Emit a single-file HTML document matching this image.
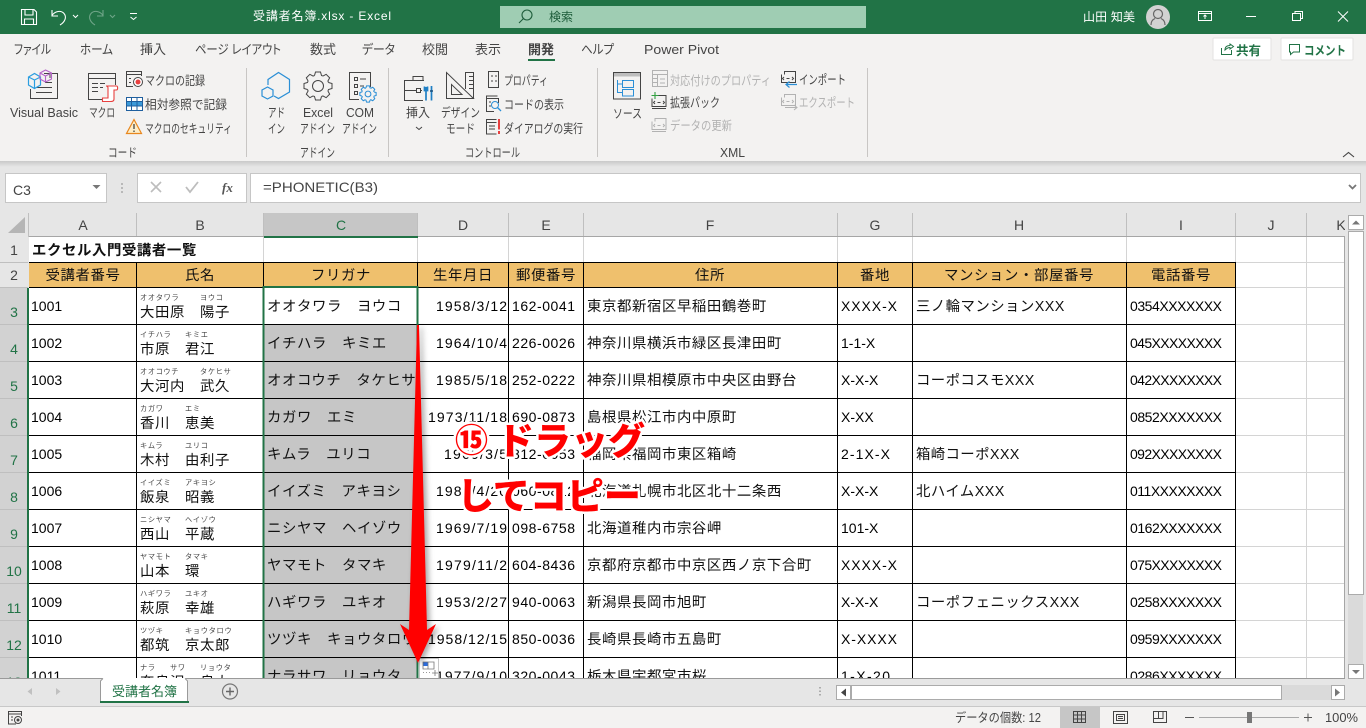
<!DOCTYPE html>
<html lang="ja"><head><meta charset="utf-8"><title>受講者名簿.xlsx - Excel</title>
<style>
html,body{margin:0;padding:0;background:#e6e6e6;overflow:hidden}
svg{display:block;font-family:"Liberation Sans","Noto Sans CJK JP",sans-serif}
.r{font-size:12.5px;fill:#444}
.g{font-size:12.5px;fill:#b2b2b2}
.w{font-size:12px;fill:#fff}
.t{font-size:14px;fill:#000}
.j{font-size:14.4px;letter-spacing:.6px;fill:#111}
.y{font-size:7.2px;letter-spacing:.7px;fill:#444}
.h{font-size:14px;fill:#444;text-anchor:middle}
.n{font-size:14px;fill:#217346;text-anchor:middle}
.big{font-size:37px;font-weight:900;fill:#f00;stroke:#fff;stroke-width:5px;stroke-linejoin:round;paint-order:stroke}
.i{fill:none;stroke:#444;stroke-width:1}
.b{fill:none;stroke:#2b9ee0;stroke-width:1.2}
.q{fill:none;stroke:#b2b2b2;stroke-width:1}
</style></head><body>
<svg width="1366" height="728" viewBox="0 0 1366 728" xmlns="http://www.w3.org/2000/svg">
<defs>
<path id="gt" d="M-3.5-10.5L-2.5-14H2.5L3.5-10.5L4.95-9.9"/>
<g id="gear"><use href="#gt"/><use href="#gt" transform="rotate(45)"/><use href="#gt" transform="rotate(90)"/><use href="#gt" transform="rotate(135)"/><use href="#gt" transform="rotate(180)"/><use href="#gt" transform="rotate(225)"/><use href="#gt" transform="rotate(270)"/><use href="#gt" transform="rotate(315)"/></g>
<linearGradient id="sh" x1="0" y1="0" x2="0" y2="1"><stop offset="0" stop-color="#c9c9c9"/><stop offset="1" stop-color="#e6e6e6"/></linearGradient>
</defs>

<!-- backgrounds -->
<rect width="1366" height="728" fill="#e6e6e6"/>
<rect width="1366" height="34" fill="#217346"/>
<rect y="34" width="1366" height="127" fill="#f3f2f1"/>
<rect y="161" width="1366" height="6" fill="url(#sh)"/>

<!-- title bar -->
<g fill="none" stroke="#fff" stroke-width="1.1">
<path d="M21.5 9.5H34L36.5 12V24.5H21.5ZM25 9.5V15H33V9.5M24.5 24.5V19H33.5V24.5"/>
<path d="M52 10V16H58M52 15.5C55 11 61 10 64 13.5C67 17 65 22 60 25"/>
<path d="M73 15l2.5 2.5 2.5-2.5" stroke-width="1"/>
<g stroke="#6fa588"><path d="M103 10V16H97M103 15.5C100 11 94 10 91 13.5C88 17 90 22 95 25"/><path d="M110 15l2.5 2.5 2.5-2.5"/></g>
<path d="M130 13.5H137M130.5 17l3 2.5 3-2.5" stroke-width="1"/>
</g>
<text class="w" x="253" y="20" textLength="138" lengthAdjust="spacing" font-size="13">受講者名簿.xlsx  -  Excel</text>
<rect x="500" y="6" width="366" height="22" fill="#9fcdb3"/>
<g fill="none" stroke="#1d5c3a" stroke-width="1.1"><circle cx="527" cy="15" r="5"/><path d="M523.5 18.5L519 23"/></g>
<text x="549" y="21" font-size="12" fill="#1d5c3a">検索</text>
<text class="w" x="1083" y="21" textLength="52" lengthAdjust="spacing">山田 知美</text>
<circle cx="1158" cy="17" r="12" fill="#d2d2d2"/>
<g fill="none" stroke="#666" stroke-width="1.2"><circle cx="1158" cy="14" r="4.5"/><path d="M1151 25C1151 20 1154 19 1155 18.5M1165 25C1165 20 1162 19 1161 18.5"/></g>
<g fill="none" stroke="#fff" stroke-width="1">
<path d="M1198.5 11.5H1211.5V20.5H1198.5ZM1198.5 13.5H1211.5M1205 19V15M1203.5 16.5L1205 15L1206.5 16.5"/>
<path d="M1246 16.5H1256"/>
<path d="M1292.5 13.5H1300.5V20.5H1292.5ZM1295 13V11.500H1302.5V18.5H1301"/>
<path d="M1338 11.5L1348 21.5M1348 11.5L1338 21.5"/>
</g>

<!-- tabs -->
<g style="font-size:13px;fill:#444;font-feature-settings:'palt'">
<text x="14" y="54" textLength="37" lengthAdjust="spacingAndGlyphs">ファイル</text>
<text x="80" y="54" textLength="33" lengthAdjust="spacingAndGlyphs">ホーム</text>
<text x="140" y="54" textLength="26" lengthAdjust="spacingAndGlyphs">挿入</text>
<text x="195" y="54" textLength="86" lengthAdjust="spacingAndGlyphs">ページ レイアウト</text>
<text x="310" y="54" textLength="26" lengthAdjust="spacingAndGlyphs">数式</text>
<text x="362" y="54" textLength="33" lengthAdjust="spacingAndGlyphs">データ</text>
<text x="422" y="54" textLength="26" lengthAdjust="spacingAndGlyphs">校閲</text>
<text x="475" y="54" textLength="26" lengthAdjust="spacingAndGlyphs">表示</text>
<text x="528" y="54" textLength="26" lengthAdjust="spacingAndGlyphs" font-weight="700">開発</text>
<text x="581" y="54" textLength="33" lengthAdjust="spacingAndGlyphs">ヘルプ</text>
<text x="644" y="54" textLength="75" lengthAdjust="spacingAndGlyphs">Power Pivot</text>
</g>
<rect x="528" y="59" width="27" height="2" fill="#217346"/>
<!-- share / comment -->
<rect x="1213" y="38" width="58" height="22" rx="1" fill="#fff" stroke="#e3e2e1"/>
<rect x="1281" y="38" width="72" height="22" rx="1" fill="#fff" stroke="#e3e2e1"/>
<g fill="none" stroke="#217346" stroke-width="1"><path d="M1221.5 48V54.5H1231.5V50M1225 50C1225 47 1227 45.5 1230 45.5V44L1233.5 46.5L1230 49V47.5C1228 47.5 1226.5 48.5 1225 50Z"/><path d="M1289.5 44.5H1299.5V52H1293.5L1290.5 54.5V52H1289.5Z"/></g>
<text x="1236" y="55" font-size="12.5" font-weight="700" fill="#217346">共有</text>
<text x="1304" y="55" font-size="12.5" font-weight="700" fill="#217346" textLength="42" lengthAdjust="spacingAndGlyphs">コメント</text>
<path d="M1343 157L1348.5 152.5L1354 157" fill="none" stroke="#444" stroke-width="1.1"/>

<!-- separators -->
<g fill="#c8c6c4"><rect x="246" y="68" width="1" height="89"/><rect x="388" y="68" width="1" height="89"/><rect x="597" y="68" width="1" height="89"/><rect x="867" y="68" width="1" height="89"/></g>

<!-- ribbon labels -->
<text class="r" x="10" y="117" textLength="68" lengthAdjust="spacingAndGlyphs">Visual Basic</text>
<text class="r" x="89" y="117" textLength="26" lengthAdjust="spacingAndGlyphs">マクロ</text>
<text class="r" x="145" y="85" textLength="60" lengthAdjust="spacingAndGlyphs">マクロの記録</text>
<text class="r" x="145" y="109" textLength="82" lengthAdjust="spacingAndGlyphs">相対参照で記録</text>
<text class="r" x="145" y="133" textLength="87" lengthAdjust="spacingAndGlyphs">マクロのセキュリティ</text>
<text class="r" x="108" y="157" textLength="29" lengthAdjust="spacingAndGlyphs" font-size="11">コード</text>
<text class="r" x="268" y="117" textLength="17" lengthAdjust="spacingAndGlyphs">アド</text>
<text class="r" x="268" y="133" textLength="17" lengthAdjust="spacingAndGlyphs">イン</text>
<text class="r" x="303" y="117" textLength="30" lengthAdjust="spacingAndGlyphs">Excel</text>
<text class="r" x="300" y="133" textLength="35" lengthAdjust="spacingAndGlyphs">アドイン</text>
<text class="r" x="346" y="117" textLength="28" lengthAdjust="spacingAndGlyphs">COM</text>
<text class="r" x="342" y="133" textLength="35" lengthAdjust="spacingAndGlyphs">アドイン</text>
<text class="r" x="300" y="157" textLength="35" lengthAdjust="spacingAndGlyphs">アドイン</text>
<text class="r" x="406" y="117" textLength="24" lengthAdjust="spacingAndGlyphs">挿入</text>
<path d="M416 127l3 2.5 3-2.5" fill="none" stroke="#444"/>
<text class="r" x="441" y="117" textLength="39" lengthAdjust="spacingAndGlyphs">デザイン</text>
<text class="r" x="446" y="133" textLength="29" lengthAdjust="spacingAndGlyphs">モード</text>
<text class="r" x="504" y="85" textLength="44" lengthAdjust="spacingAndGlyphs">プロパティ</text>
<text class="r" x="504" y="109" textLength="60" lengthAdjust="spacingAndGlyphs">コードの表示</text>
<text class="r" x="504" y="133" textLength="79" lengthAdjust="spacingAndGlyphs">ダイアログの実行</text>
<text class="r" x="465" y="157" textLength="55" lengthAdjust="spacingAndGlyphs">コントロール</text>
<text class="r" x="613" y="118" textLength="29" lengthAdjust="spacingAndGlyphs">ソース</text>
<text class="g" x="670" y="85" textLength="101" lengthAdjust="spacingAndGlyphs">対応付けのプロパティ</text>
<text class="r" x="670" y="107" textLength="50" lengthAdjust="spacingAndGlyphs">拡張パック</text>
<text class="g" x="670" y="130" textLength="62" lengthAdjust="spacingAndGlyphs">データの更新</text>
<text class="r" x="799" y="84" textLength="47" lengthAdjust="spacingAndGlyphs">インポート</text>
<text class="g" x="799" y="107" textLength="56" lengthAdjust="spacingAndGlyphs">エクスポート</text>
<text class="r" x="720" y="157" textLength="25" lengthAdjust="spacingAndGlyphs">XML</text>

<!-- ribbon icons -->
<path class="i" d="M44 73.5H57.5V98.5H30.5V89M36 87.5H52M36 92.5H52M45 82.5H52M50 73.5V78"/>
<path class="b" d="M28.5 77L34.5 73.5L40.5 77V85L34.5 88.5L28.5 85ZM28.5 77L34.5 80L40.5 77M34.5 80V88.5"/>
<path fill="none" stroke="#b565c8" stroke-width="1.1" d="M40 73L45.5 70L51.5 73V79L45.5 82L40 79ZM40 73L45.5 76L51.5 73M45.5 76V82"/>
<path class="i" d="M103 99.5H88.5V73.5H115.5V85M88.5 78.5H115.5M92 83.5H98M100 83.5H105M92 87.5H98M92 91.5H98M100 87.5H103"/>
<path fill="#fff" stroke="#e8403f" stroke-width="1.1" d="M106 86H116.5C118 86 118 90 116.5 90H114V99C114 101.5 112 101.5 110 101.5H102.5V98H108V88C108 86.5 107 86 106 86Z"/>
<path class="i" d="M133 86.5H126.5V71.5H141.5V76M126.5 74.5H141.5M129 78.5H131M129 82.5H131"/>
<circle cx="138" cy="82" r="4.5" fill="#fff" stroke="#444"/><circle cx="138" cy="82" r="2.5" fill="#e8403f"/>
<rect x="126.5" y="97.5" width="16" height="13" fill="#fff" stroke="#1f5f9e"/><rect x="127" y="101.5" width="15" height="4.5" fill="#3a9ad9"/><path d="M131.5 97.5V110.5M137 97.5V110.5M126.5 101.5H142.5M126.5 106H142.5" stroke="#1f5f9e" fill="none"/>
<path d="M134 119.5L141.5 133.5H126.5Z" fill="#fdeec8" stroke="#e8871e" stroke-width="1.2"/><path d="M134 124V129M134 130.5V132" stroke="#444" stroke-width="1.3"/>

<path fill="none" stroke="#2b8fd6" stroke-width="1.2" d="M268 85V79.5L278.5 72.5L289.5 79.5V92L278.5 98.5L274 96"/>
<path fill="none" stroke="#2b8fd6" stroke-width="1.2" d="M267.5 87L273 90V96L267.5 99L262 96V90Z"/>
<g transform="translate(318 86)" class="i"><use href="#gear"/><circle r="5.5"/></g>
<path class="i" d="M359 99.5H349.5V72.5H370.5V87M354.5 77.5H357.5V80.5H354.5ZM354.5 84.5H357.5V87.5H354.5ZM354.5 91.5H357.5V94.5H354.5ZM360 79H366M360 86H364"/>
<g transform="translate(368 94) scale(.58)" fill="none" stroke="#2b8fd6" stroke-width="1.8"><use href="#gear"/><circle r="5"/></g>

<path class="i" d="M424 80.5H404.5V100.5H423M413 80.5V76.5H423V80.5M404.5 90.5H416M420 90.5H422M416.5 88.5H420.5V92.5H416.5Z"/>
<path fill="none" stroke="#1f7fc4" stroke-width="1.7" d="M426 87V90M424.5 86.5V90.5H427.5V86.5M426 91V100.5M431.5 86V100.5"/>
<path fill="none" stroke="#1a4f7a" stroke-width="1.5" d="M430 91H433"/>
<path class="i" d="M446.5 72.5V98.5H473.5ZM451.5 84.5V94.5H462ZM465.5 89V72.5H473.5V98.5M469 76.5H473.5M469 80.5H473.5M469 84.5H473.5M469 88.5H473.5"/>
<path class="i" d="M488.5 71.5H498.5V87.5H488.5ZM491 76H493M495 76H497M491 81H493M495 81H497"/>
<path class="i" d="M497.5 96H486.5V111.5H494M486.5 98.5H498.5V103M489 102H491M489 106H491"/>
<circle cx="495" cy="105" r="3.5" fill="none" stroke="#2b8fd6"/><path d="M497.5 107.5L501 111" stroke="#2b8fd6" stroke-width="1.3"/>
<path class="i" d="M496.5 119.5H486.5V134H496.5M486.5 122.5H496.5M489 126H495M489 129H495"/>
<path d="M499 119V129.5M499 131V134" stroke="#e8403f" stroke-width="2"/>

<rect x="613.5" y="72.5" width="27" height="26.5" fill="none" stroke="#444"/><rect x="614" y="73" width="26" height="3.5" fill="#bdbdbd"/>
<path fill="none" stroke="#2b8fd6" stroke-width="1" d="M622.5 80.5H633.5V87.5H622.5ZM622.5 89.5H633.5V96H622.5ZM617.5 80V92.5H622M617.5 84H622"/>

<path class="q" d="M652.5 70.5H667.5V86.5H652.5ZM652.5 74.5H667.5M657.5 74.5V86.5M652.5 78.5H657.5M652.5 82.5H657.5M660 79H665M660 83H665"/>
<path class="i" d="M652 98.5V106.5H666V95.5H655V98.5M652 108.5H666"/><path d="M655 101l-1.5 1.5 1.5 1.5M663 101l1.5 1.5-1.5 1.5M657.5 102.5h3" class="i"/>
<path d="M655 92V99M651.5 95.5H658.5" stroke="#30a040" stroke-width="1.1"/>
<path class="q" d="M652 121.5V129.5H666V118.5H655V121.5M652 131.5H666M655 124l-1.5 1.5 1.5 1.5M663 124l1.5 1.5-1.5 1.5M657.5 125.5h3"/>
<path class="i" d="M781.5 74.5V82.5H795.5V71.5H784.5V74.5M784 77l-1.5 1.5 1.5 1.5M792 77l1.5 1.5-1.5 1.5M786.5 78.5h3"/>
<path fill="none" stroke="#2b8fd6" stroke-width="1.2" d="M797 84.5H786M789.5 81.5L786 84.5L789.5 87.5"/>
<path class="q" d="M781.5 97.5V105.5H795.5V94.5H784.5V97.5M784 100l-1.5 1.5 1.5 1.5M792 100l1.5 1.5-1.5 1.5M786.5 101.5h3M785 107.5H797M794 105L797 107.5L794 110"/>

<!-- formula bar -->
<rect x="5.5" y="173.5" width="101" height="29" fill="#fff" stroke="#c6c6c6"/>
<text x="13" y="195" font-size="14" fill="#444">C3</text>
<path d="M92.5 185H100.5L96.5 189Z" fill="#777"/>
<path d="M122 183v2M122 187v2M122 191v2" stroke="#aaa" stroke-width="1.5"/>
<rect x="137.5" y="173.5" width="109" height="29" fill="#fff" stroke="#c6c6c6"/>
<path d="M151 182L161 192M161 182L151 192" stroke="#bdbdbd" stroke-width="1.6"/>
<path d="M186 187L190 192L198 182" stroke="#bdbdbd" stroke-width="1.8" fill="none"/>
<text x="222" y="192" font-family="Liberation Serif" font-style="italic" font-weight="700" font-size="13" fill="#555">fx</text>
<rect x="250.5" y="173.5" width="1110" height="29" fill="#fff" stroke="#c6c6c6"/>
<text x="263" y="192" font-size="14" fill="#444" textLength="115" lengthAdjust="spacingAndGlyphs">=PHONETIC(B3)</text>
<path d="M1349 185L1352.5 188.5L1356 185" fill="none" stroke="#777" stroke-width="1.8"/>

<!-- grid -->
<rect x="29" y="237" width="1316" height="441" fill="#fff"/>
<!-- headers -->
<rect x="0" y="213" width="1345" height="24" fill="#e6e6e6"/>
<rect x="264" y="213" width="154" height="23" fill="#c6c6c6"/>
<rect x="0" y="237" width="28" height="441" fill="#e6e6e6"/>
<rect x="0" y="288" width="28" height="390" fill="#d2d2d2"/>
<path d="M8 233L25 217V233Z" fill="#b5b5b5"/>
<g fill="#bfbfbf"><rect x="28" y="213" width="1" height="24"/><rect x="136" y="213" width="1" height="24"/><rect x="263" y="213" width="1" height="24"/><rect x="417" y="213" width="1" height="24"/><rect x="508" y="213" width="1" height="24"/><rect x="583" y="213" width="1" height="24"/><rect x="837" y="213" width="1" height="24"/><rect x="912" y="213" width="1" height="24"/><rect x="1126" y="213" width="1" height="24"/><rect x="1235" y="213" width="1" height="24"/><rect x="1306" y="213" width="1" height="24"/></g>
<text class="h" x="83" y="230">A</text><text class="h" x="200" y="230">B</text><text class="n" x="341" y="230">C</text><text class="h" x="463" y="230">D</text><text class="h" x="546" y="230">E</text><text class="h" x="710" y="230">F</text><text class="h" x="875" y="230">G</text><text class="h" x="1019" y="230">H</text><text class="h" x="1181" y="230">I</text><text class="h" x="1271" y="230">J</text><text class="h" x="1341" y="230">K</text>
<text class="h" x="14" y="255">1</text><text class="h" x="14" y="280">2</text>
<text class="n" x="14" y="317">3</text><text class="n" x="14" y="354">4</text><text class="n" x="14" y="391">5</text><text class="n" x="14" y="428">6</text><text class="n" x="14" y="465">7</text><text class="n" x="14" y="502">8</text><text class="n" x="14" y="539">9</text><text class="n" x="14" y="576">10</text><text class="n" x="14" y="613">11</text><text class="n" x="14" y="650">12</text><text class="n" x="14" y="687">13</text>
<g fill="#bfbfbf"><rect y="262" width="28" height="1"/><rect y="287" width="28" height="1"/><rect y="324" width="28" height="1"/><rect y="361" width="28" height="1"/><rect y="398" width="28" height="1"/><rect y="435" width="28" height="1"/><rect y="472" width="28" height="1"/><rect y="509" width="28" height="1"/><rect y="546" width="28" height="1"/><rect y="583" width="28" height="1"/><rect y="620" width="28" height="1"/><rect y="657" width="28" height="1"/></g>
<!-- fills -->
<rect x="29" y="263" width="1207" height="25" fill="#efc06d"/>
<rect x="264" y="325" width="154" height="353" fill="#c6c6c6"/>
<!-- light gridlines -->
<path d="M263.5 237V263M417.5 237V263M508.5 237V263M583.5 237V263M837.5 237V263M912.5 237V263M1126.5 237V263M1235.5 237V263M1306.5 237V678M264 262.5H1345M1236 287.5H1345M1236 324.5H1345M1236 361.5H1345M1236 398.5H1345M1236 435.5H1345M1236 472.5H1345M1236 509.5H1345M1236 546.5H1345M1236 583.5H1345M1236 620.5H1345M1236 657.5H1345" stroke="#d4d4d4" fill="none"/>
<path d="M1345 236.5H29M1344.5 236V678" stroke="#a6a6a6" fill="none"/>
<!-- black borders -->
<path d="M29 262.5H1236M29 287.5H1236M29 324.5H1236M29 361.5H1236M29 398.5H1236M29 435.5H1236M29 472.5H1236M29 509.5H1236M29 546.5H1236M29 583.5H1236M29 620.5H1236M29 657.5H1236M136.5 262V678M263.5 262V678M417.5 262V678M508.5 262V678M583.5 262V678M837.5 262V678M912.5 262V678M1126.5 262V678M1235.5 262V678" stroke="#000" fill="none"/>
<!-- selection -->
<rect x="264" y="236" width="154" height="2" fill="#217346"/>
<rect x="27" y="288" width="2" height="390" fill="#217346"/>
<rect x="263.5" y="287" width="154" height="395" fill="none" stroke="#217346" stroke-width="2"/>

<!-- text row 1,2 -->
<text class="j" x="32" y="255" font-weight="700">エクセル入門受講者一覧</text>
<g text-anchor="middle">
<text class="j" x="83" y="280">受講者番号</text><text class="j" x="200" y="280">氏名</text><text class="j" x="341" y="280">フリガナ</text><text class="j" x="463" y="280">生年月日</text><text class="j" x="546" y="280">郵便番号</text><text class="j" x="710" y="280">住所</text><text class="j" x="875" y="280">番地</text><text class="j" x="1019" y="280">マンション・部屋番号</text><text class="j" x="1181" y="280">電話番号</text>
</g>

<!-- R3 -->
<text class="t" x="31" y="311">1001</text><text class="y" x="140" y="300">オオタワラ</text><text class="y" x="200" y="300">ヨウコ</text><text class="j" x="140" y="317">大田原　陽子</text><text class="j" x="267" y="311">オオタワラ　ヨウコ</text><text class="t" x="436" y="311" textLength="71">1958/3/12</text><text class="t" x="512" y="311" textLength="63">162-0041</text><text class="j" x="587" y="311">東京都新宿区早稲田鶴巻町</text><text class="t" x="841" y="311" textLength="56">XXXX-X</text><text class="j" x="916" y="311" textLength="149">三ノ輪マンションXXX</text><text class="t" x="1130" y="311" textLength="92">0354XXXXXXX</text>
<!-- R4 -->
<text class="t" x="31" y="348">1002</text><text class="y" x="140" y="337">イチハラ</text><text class="y" x="185" y="337">キミエ</text><text class="j" x="140" y="354">市原　君江</text><text class="j" x="267" y="348">イチハラ　キミエ</text><text class="t" x="436" y="348" textLength="71">1964/10/4</text><text class="t" x="512" y="348" textLength="63">226-0026</text><text class="j" x="587" y="348">神奈川県横浜市緑区長津田町</text><text class="t" x="841" y="348">1-1-X</text><text class="t" x="1130" y="348" textLength="92">045XXXXXXXX</text>
<!-- R5 -->
<text class="t" x="31" y="385">1003</text><text class="y" x="140" y="374">オオコウチ</text><text class="y" x="200" y="374">タケヒサ</text><text class="j" x="140" y="391">大河内　武久</text><text class="j" x="267" y="385">オオコウチ　タケヒサ</text><text class="t" x="436" y="385" textLength="71">1985/5/18</text><text class="t" x="512" y="385" textLength="63">252-0222</text><text class="j" x="587" y="385">神奈川県相模原市中央区由野台</text><text class="t" x="841" y="385">X-X-X</text><text class="j" x="916" y="385" textLength="119">コーポコスモXXX</text><text class="t" x="1130" y="385" textLength="92">042XXXXXXXX</text>
<!-- R6 -->
<text class="t" x="31" y="422">1004</text><text class="y" x="140" y="411">カガワ</text><text class="y" x="185" y="411">エミ</text><text class="j" x="140" y="428">香川　恵美</text><text class="j" x="267" y="422">カガワ　エミ</text><text class="t" x="428" y="422" textLength="79">1973/11/18</text><text class="t" x="512" y="422" textLength="63">690-0873</text><text class="j" x="587" y="422">島根県松江市内中原町</text><text class="t" x="841" y="422">X-XX</text><text class="t" x="1130" y="422" textLength="92">0852XXXXXXX</text>
<!-- R7 -->
<text class="t" x="31" y="459">1005</text><text class="y" x="140" y="448">キムラ</text><text class="y" x="185" y="448">ユリコ</text><text class="j" x="140" y="465">木村　由利子</text><text class="j" x="267" y="459">キムラ　ユリコ</text><text class="t" x="444" y="459" textLength="63">1969/3/5</text><text class="t" x="512" y="459" textLength="63">812-0053</text><text class="j" x="587" y="459">福岡県福岡市東区箱崎</text><text class="t" x="841" y="459" textLength="49">2-1X-X</text><text class="j" x="916" y="459" textLength="104">箱崎コーポXXX</text><text class="t" x="1130" y="459" textLength="92">092XXXXXXXX</text>
<!-- R8 -->
<text class="t" x="31" y="496">1006</text><text class="y" x="140" y="485">イイズミ</text><text class="y" x="185" y="485">アキヨシ</text><text class="j" x="140" y="502">飯泉　昭義</text><text class="j" x="267" y="496">イイズミ　アキヨシ</text><text class="t" x="436" y="496" textLength="71">1984/4/20</text><text class="t" x="512" y="496" textLength="63">060-0812</text><text class="j" x="587" y="496">北海道札幌市北区北十二条西</text><text class="t" x="841" y="496">X-X-X</text><text class="j" x="916" y="496" textLength="89">北ハイムXXX</text><text class="t" x="1130" y="496" textLength="92">011XXXXXXXX</text>
<!-- R9 -->
<text class="t" x="31" y="533">1007</text><text class="y" x="140" y="522">ニシヤマ</text><text class="y" x="185" y="522">ヘイゾウ</text><text class="j" x="140" y="539">西山　平蔵</text><text class="j" x="267" y="533">ニシヤマ　ヘイゾウ</text><text class="t" x="436" y="533" textLength="71">1969/7/19</text><text class="t" x="512" y="533" textLength="63">098-6758</text><text class="j" x="587" y="533">北海道稚内市宗谷岬</text><text class="t" x="841" y="533">101-X</text><text class="t" x="1130" y="533" textLength="92">0162XXXXXXX</text>
<!-- R10 -->
<text class="t" x="31" y="570">1008</text><text class="y" x="140" y="559">ヤマモト</text><text class="y" x="185" y="559">タマキ</text><text class="j" x="140" y="576">山本　環</text><text class="j" x="267" y="570">ヤマモト　タマキ</text><text class="t" x="436" y="570" textLength="71">1979/11/2</text><text class="t" x="512" y="570" textLength="63">604-8436</text><text class="j" x="587" y="570">京都府京都市中京区西ノ京下合町</text><text class="t" x="841" y="570" textLength="56">XXXX-X</text><text class="t" x="1130" y="570" textLength="92">075XXXXXXXX</text>
<!-- R11 -->
<text class="t" x="31" y="607">1009</text><text class="y" x="140" y="596">ハギワラ</text><text class="y" x="185" y="596">ユキオ</text><text class="j" x="140" y="613">萩原　幸雄</text><text class="j" x="267" y="607">ハギワラ　ユキオ</text><text class="t" x="436" y="607" textLength="71">1953/2/27</text><text class="t" x="512" y="607" textLength="63">940-0063</text><text class="j" x="587" y="607">新潟県長岡市旭町</text><text class="t" x="841" y="607">X-X-X</text><text class="j" x="916" y="607" textLength="164">コーポフェニックスXXX</text><text class="t" x="1130" y="607" textLength="92">0258XXXXXXX</text>
<!-- R12 -->
<text class="t" x="31" y="644">1010</text><text class="y" x="140" y="633">ツヅキ</text><text class="y" x="185" y="633">キョウタロウ</text><text class="j" x="140" y="650">都筑　京太郎</text><text class="j" x="267" y="644">ツヅキ　キョウタロウ</text><text class="t" x="428" y="644" textLength="79">1958/12/15</text><text class="t" x="512" y="644" textLength="63">850-0036</text><text class="j" x="587" y="644">長崎県長崎市五島町</text><text class="t" x="841" y="644" textLength="56">X-XXXX</text><text class="t" x="1130" y="644" textLength="92">0959XXXXXXX</text>
<!-- R13 -->
<text class="t" x="31" y="681">1011</text><text class="y" x="140" y="670">ナラ</text><text class="y" x="170" y="670">サワ</text><text class="y" x="200" y="670">リョウタ</text><text class="j" x="140" y="687">奈良沢　良太</text><text class="j" x="267" y="681">ナラサワ　リョウタ</text><text class="t" x="436" y="681" textLength="71">1977/9/10</text><text class="t" x="512" y="681" textLength="63">320-0043</text><text class="j" x="587" y="681">栃木県宇都宮市桜</text><text class="t" x="841" y="681" textLength="49">1-X-20</text><text class="t" x="1130" y="681" textLength="92">0286XXXXXXX</text>

<!-- smart tag -->
<rect x="419.5" y="658.5" width="19" height="20" fill="#fff" stroke="#c6c6c6"/>
<rect x="423" y="662" width="5" height="4" fill="#2e6fe0"/><path d="M423 662H434V669H423ZM428 662V669M423 672.5h1M426 672.5h1M429 672.5h1" fill="none" stroke="#777" stroke-width=".8"/><path d="M432 673H438M435 670V676" stroke="#777" stroke-width=".8"/>

<!-- arrow -->
<polygon points="417,325 419,325 427,630 436,624 418,663 400,624 409,630" fill="#f00" style="filter:drop-shadow(3px 2px 3px rgba(0,0,0,.35))"/>

<!-- overlay text -->
<text class="big" x="455" y="452" style="font-size:33px">⑮</text>
<text class="big" x="497" y="454">ドラッグ</text>
<text class="big" x="457" y="509">してコピー</text>

<!-- v scrollbar -->
<rect x="1345" y="213" width="21" height="466" fill="#e6e6e6"/>
<rect x="1348" y="215" width="15" height="464" fill="#dadada"/>
<rect x="1348.5" y="231.5" width="15" height="363" fill="#fff" stroke="#ababab"/>
<rect x="1348.5" y="215.5" width="15" height="14" fill="#fff" stroke="#ababab"/><path d="M1352 224.5H1360L1356 220.5Z" fill="#777"/>
<rect x="1348.5" y="664.5" width="15" height="14" fill="#fff" stroke="#ababab"/><path d="M1352 670H1360L1356 674Z" fill="#777"/>

<!-- tab bar -->
<rect x="0" y="679" width="1366" height="28" fill="#e6e6e6"/>
<rect x="0" y="678" width="1345" height="1" fill="#9a9a9a"/>
<path d="M100 702V681L103 678H185L188 681V702Z" fill="#fff"/>
<path d="M100.5 702V681L103 678.5M187.5 702V681L185 678.5" fill="none" stroke="#9a9a9a"/>
<rect x="100" y="701" width="89" height="2" fill="#217346"/>
<text x="112" y="696" font-size="13" fill="#217346" textLength="65" lengthAdjust="spacing">受講者名簿</text>
<circle cx="230" cy="691.5" r="7.5" fill="none" stroke="#777" stroke-width="1.2"/><path d="M226 691.5H234M230 687.5V695.5" stroke="#666" stroke-width="1.4"/>
<path d="M32 688V695L27.5 691.5ZM56 688V695L60.5 691.5Z" fill="#c0c0c0"/>
<path d="M820 687v1.5M820 690.5v1.5M820 694v1.5" stroke="#999" stroke-width="1.5"/>
<!-- h scrollbar -->
<rect x="836.5" y="685.5" width="14" height="14" fill="#fff" stroke="#ababab"/><path d="M846 688.5V696.5L841 692.5Z" fill="#444"/>
<rect x="851" y="685" width="480" height="15" fill="#dadada"/>
<rect x="851.5" y="685.5" width="430" height="14" fill="#fff" stroke="#ababab"/>
<rect x="1331.5" y="685.5" width="13" height="14" fill="#fff" stroke="#ababab"/><path d="M1335 688.5V696.5L1340 692.5Z" fill="#777"/>

<!-- status bar -->
<rect y="706" width="1366" height="22" fill="#f3f2f1"/>
<rect y="706" width="1366" height="1" fill="#c8c8c8"/>
<path class="i" d="M16 724H8.5V711.5H21.5V716M8.5 714H21.5M11 717H13M11 720H13"/><circle cx="18" cy="720" r="3.5" fill="#f3f2f1" stroke="#444"/><circle cx="18" cy="720" r="1.5" fill="#444"/>
<text class="r" x="955" y="722" textLength="86" lengthAdjust="spacingAndGlyphs">データの個数: 12</text>
<rect x="1060" y="707" width="40" height="21" fill="#c6c6c6"/>
<path class="i" d="M1073.5 711.5H1085.5V722.5H1073.5ZM1073.5 715H1085.5M1073.5 719H1085.5M1077.5 711.5V722.5M1081.5 711.5V722.5"/>
<path class="i" d="M1113.5 711.5H1127.5V723.5H1113.5ZM1116.5 714.5H1124.5V720.5H1116.5ZM1118 716.5H1123M1118 718.5H1123"/>
<path class="i" d="M1153.5 711.5H1166.5V722.5H1153.5ZM1153.5 718.5H1163V711.5M1158.5 711.5V718.5"/>
<path d="M1185 717.5H1194M1304 717.5H1312M1308 713.5V721.5" stroke="#555" fill="none"/>
<rect x="1199" y="717" width="100" height="1" fill="#a8a8a8"/>
<rect x="1247" y="712" width="5" height="11" fill="#777"/>
<text class="r" x="1325" y="722" textLength="33" lengthAdjust="spacingAndGlyphs">100%</text>
</svg>
</body></html>
